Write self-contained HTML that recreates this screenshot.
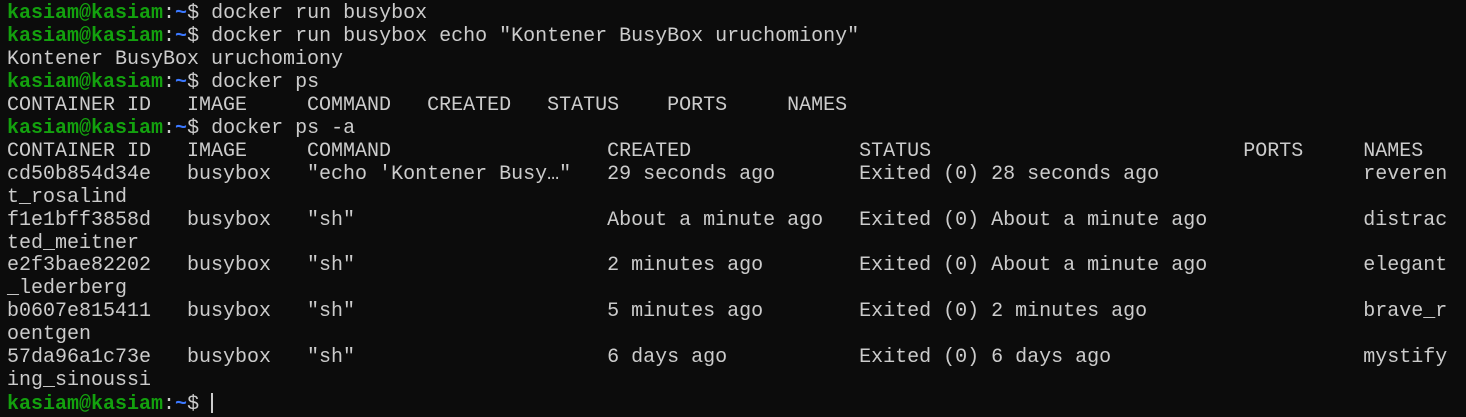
<!DOCTYPE html>
<html><head><meta charset="utf-8"><style>
html,body{margin:0;padding:0;background:#0c0c0c;width:1466px;height:400px;overflow:hidden}
pre{margin:0;position:absolute;left:7px;top:3px;font-family:"Liberation Mono","DejaVu Sans Mono",monospace;font-size:20px;line-height:22.95px;color:#cccccc}
.g{color:#13a10e;font-weight:bold}.b{color:#3b78ff;font-weight:bold}
.c{display:inline-block;width:2px;height:20px;background:#ccc;vertical-align:-4px}
</style></head><body><pre><span class="g">kasiam@kasiam</span>:<span class="b">~</span>$ docker run busybox
<span class="g">kasiam@kasiam</span>:<span class="b">~</span>$ docker run busybox echo "Kontener BusyBox uruchomiony"
Kontener BusyBox uruchomiony
<span class="g">kasiam@kasiam</span>:<span class="b">~</span>$ docker ps
CONTAINER ID   IMAGE     COMMAND   CREATED   STATUS    PORTS     NAMES
<span class="g">kasiam@kasiam</span>:<span class="b">~</span>$ docker ps -a
CONTAINER ID   IMAGE     COMMAND                  CREATED              STATUS                          PORTS     NAMES
cd50b854d34e   busybox   "echo 'Kontener Busy…"   29 seconds ago       Exited (0) 28 seconds ago                 reveren
t_rosalind
f1e1bff3858d   busybox   "sh"                     About a minute ago   Exited (0) About a minute ago             distrac
ted_meitner
e2f3bae82202   busybox   "sh"                     2 minutes ago        Exited (0) About a minute ago             elegant
_lederberg
b0607e815411   busybox   "sh"                     5 minutes ago        Exited (0) 2 minutes ago                  brave_r
oentgen
57da96a1c73e   busybox   "sh"                     6 days ago           Exited (0) 6 days ago                     mystify
ing_sinoussi
<span class="g">kasiam@kasiam</span>:<span class="b">~</span>$ <span class="c"></span></pre></body></html>
